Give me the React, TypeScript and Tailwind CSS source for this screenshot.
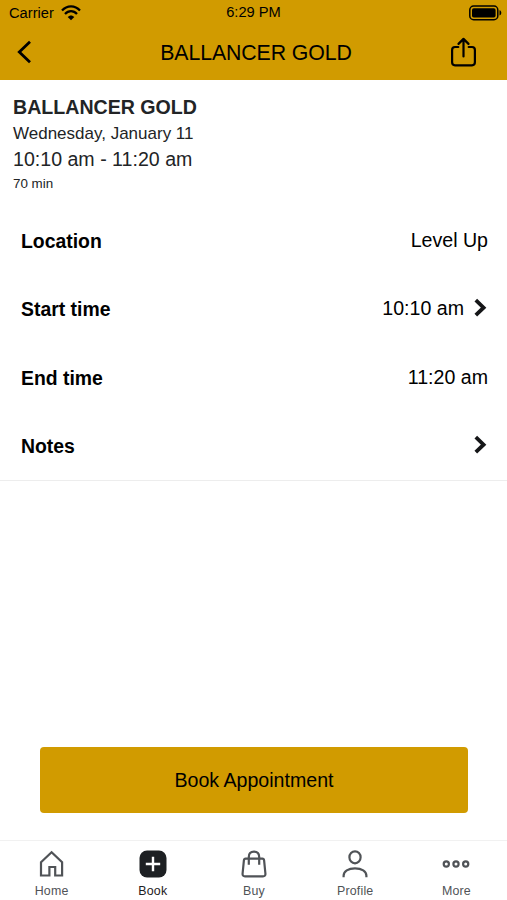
import type { ReactNode } from 'react';

const GOLD = 'bg-[#d19b00]';

function StatusBar() {
  return (
    <div className="grid h-[25px] grid-cols-3 items-center pl-[9px] pr-[5px] text-[14.7px] leading-none">
      <div className="flex items-center gap-[7px]">
        <span className="pt-px">Carrier</span>
        <svg width="20" height="16" viewBox="0 0 20 16" fill="none" stroke="currentColor" strokeWidth="2.2">
          <path d="M1 5.6C6-.1 14-.1 19 5.6" />
          <path d="M4 9C7.5 5.1 12.5 5.1 16 9" />
          <path d="M6.7 12C8.6 9.9 11.4 9.9 13.3 12L10 15.3Z" fill="currentColor" stroke="none" />
        </svg>
      </div>
      <span className="pr-[4px] text-center">6:29 PM</span>
      <svg className="justify-self-end" width="33" height="16" viewBox="0 0 33 16">
        <rect x=".8" y="1.1" width="28" height="13.6" rx="3.8" fill="none" stroke="currentColor" strokeWidth="1.5" />
        <rect x="3" y="3.3" width="23.6" height="9.2" rx="1.8" fill="currentColor" />
        <path d="M30.5 5.3c2.4.5 2.4 4.7 0 5.2Z" fill="currentColor" />
      </svg>
    </div>
  );
}

function Header() {
  return (
    <header className={`${GOLD} h-20 shrink-0 text-black`}>
      <StatusBar />
      <div className="grid h-[54px] grid-cols-[80px_1fr_80px] items-center">
        <button aria-label="Back" className="pl-[16px]">
          <svg width="16" height="24" viewBox="0 0 16 24" fill="none" stroke="currentColor" strokeWidth="2.8">
            <path d="M14 1.8 3.3 12 14 22.2" />
          </svg>
        </button>
        <h1 className="pl-[5px] pt-px text-center text-[21.3px] leading-[22px] tracking-[-0.1px]">BALLANCER GOLD</h1>
        <button aria-label="Share" className="justify-self-end pr-[30px]">
          <svg width="27" height="32" viewBox="0 0 27 32" fill="none" stroke="currentColor" strokeWidth="2.2" strokeLinecap="round" strokeLinejoin="round">
            <path d="M8.3 11H5Q2.1 11 2.1 14v12.3q0 3 2.9 3h17q2.9 0 2.9-3V14q0-3-2.9-3h-3.3" />
            <path d="M13.5 20.5V3.2M8.5 7.9l5-5 5 5" />
          </svg>
        </button>
      </div>
    </header>
  );
}

function Chevron() {
  return (
    <svg width="15" height="20" viewBox="0 0 15 20" fill="none" stroke="#151618" strokeWidth="3.8">
      <path d="M2.8 2.2 10.6 9.7l-7.8 7.5" />
    </svg>
  );
}

type RowProps = { label: string; value?: string; link?: boolean };

function Row({ label, value, link }: RowProps) {
  return (
    <div className="flex h-[68.4px] items-center justify-between pl-[21px] pr-[19px] text-[19.6px] leading-6 text-black">
      <span className="text-[19.4px] font-bold">{label}</span>
      <span className="flex items-center gap-[9px] pb-[2px]">
        {value}
        {link && <Chevron />}
      </span>
    </div>
  );
}

const rows: RowProps[] = [
  { label: 'Location', value: 'Level Up' },
  { label: 'Start time', value: '10:10 am', link: true },
  { label: 'End time', value: '11:20 am' },
  { label: 'Notes', link: true },
];

const tabs: { label: string; active?: boolean; icon: ReactNode }[] = [
  {
    label: 'Home',
    icon: <path d="M3 12.3 13.6 2.3l10.5 10v13.2h-6.9V17h-5.8v8.5H3Z" />,
  },
  {
    label: 'Book',
    active: true,
    icon: (
      <>
        <rect x=".5" y=".5" width="27" height="27" rx="7.5" fill="#1d2023" stroke="none" />
        <path d="M14 6.8v14.4M6.8 14h14.4" stroke="#fff" strokeWidth="2.4" />
      </>
    ),
  },
  {
    label: 'Buy',
    icon: (
      <>
        <path d="M5.6 8.6h16.8q1.5 0 1.7 1.7l1.3 13.2q.3 2.8-2.4 2.8H5q-2.7 0-2.4-2.8l1.3-13.2q.2-1.7 1.7-1.7Z" />
        <path d="M8.8 14.7V7q0-5.4 5.2-5.4T19.2 7v7.7" />
      </>
    ),
  },
  {
    label: 'Profile',
    icon: (
      <>
        <ellipse cx="14" cy="7.3" rx="5.6" ry="6" />
        <path d="M2.6 27.3v-1.5C2.6 21.3 7.2 18.4 14 18.4s11.4 2.9 11.4 7.4v1.5" />
      </>
    ),
  },
  {
    label: 'More',
    icon: (
      <>
        <circle cx="4.3" cy="14" r="2.6" />
        <circle cx="14" cy="14" r="2.6" />
        <circle cx="23.7" cy="14" r="2.6" />
      </>
    ),
  },
];

function TabBar() {
  return (
    <nav className="grid h-[60px] shrink-0 grid-cols-5 border-t border-[#f1f1f1] bg-white pl-px">
      {tabs.map((tab) => (
        <button
          key={tab.label}
          className={`flex flex-col items-center pt-[9px] text-[12.4px] leading-[14px] tracking-[0.2px] ${tab.active ? 'text-[#1d2023]' : 'text-[#505357]'}`}
        >
          <svg width="28" height="28" viewBox="0 0 28 28" fill="none" stroke="currentColor" strokeWidth="2.2">
            {tab.icon}
          </svg>
          <span className="mt-[6px]">{tab.label}</span>
        </button>
      ))}
    </nav>
  );
}

export default function App() {
  return (
    <div className="flex h-[900px] w-[507px] flex-col overflow-hidden bg-white font-['Liberation_Sans',Arial,sans-serif]">
      <Header />
      <main className="flex flex-1 flex-col">
        <section className="h-[126.6px] pl-[13px] pt-[14px] text-[#222426]">
          <h2 className="text-[19.6px] font-bold leading-[26px]">BALLANCER GOLD</h2>
          <p className="text-[17px] leading-[28px]">Wednesday, January 11</p>
          <p className="text-[19.6px] leading-[23px]">10:10 am - 11:20 am</p>
          <p className="text-[13.4px] leading-[26px]">70 min</p>
        </section>
        <section className="border-b border-[#ededed]">
          {rows.map((row) => (
            <Row key={row.label} {...row} />
          ))}
        </section>
        <div className="mt-auto px-10 pb-[27px]">
          <button className={`${GOLD} h-[66px] w-[428px] rounded-[4px] pt-[2px] text-[19.6px] text-black`}>Book Appointment</button>
        </div>
      </main>
      <TabBar />
    </div>
  );
}
